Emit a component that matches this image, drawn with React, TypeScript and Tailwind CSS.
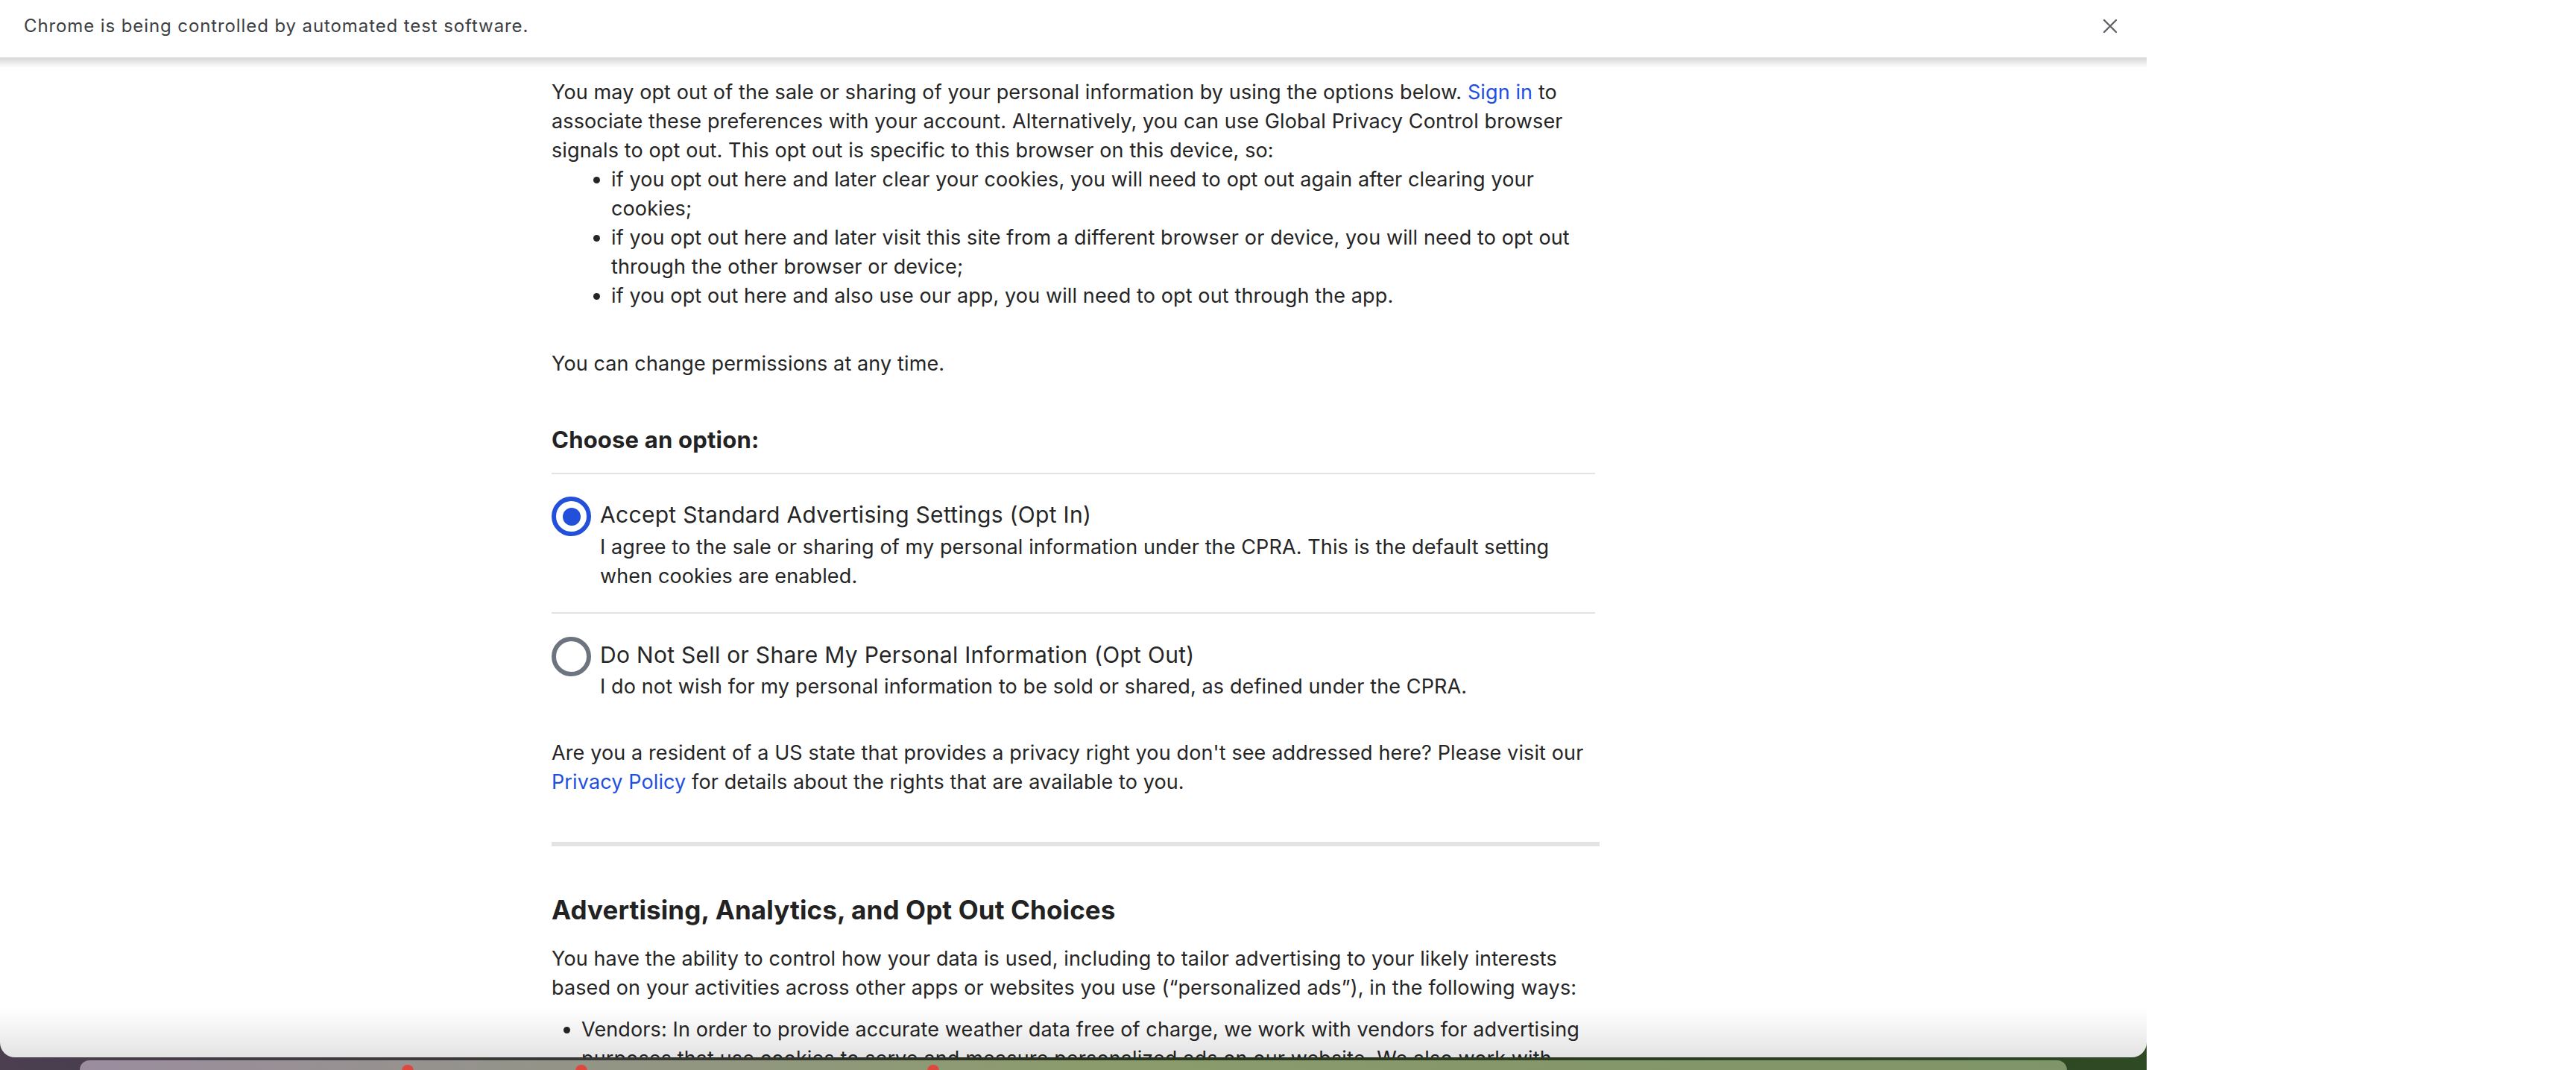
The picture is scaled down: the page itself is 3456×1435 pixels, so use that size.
import React from "react";

interface Option {
  id: string;
  title: string;
  desc: string;
  checked: boolean;
}

const options: Option[] = [
  {
    id: "opt-in",
    title: "Accept Standard Advertising Settings (Opt In)",
    desc: "I agree to the sale or sharing of my personal information under the CPRA. This is the default setting when cookies are enabled.",
    checked: true,
  },
  {
    id: "opt-out",
    title: "Do Not Sell or Share My Personal Information (Opt Out)",
    desc: "I do not wish for my personal information to be sold or shared, as defined under the CPRA.",
    checked: false,
  },
];

const Radio: React.FC<{ checked: boolean }> = ({ checked }) =>
  checked ? (
    <span className="flex h-[53px] w-[53px] shrink-0 items-center justify-center rounded-full border-[6px] border-[#2350db]">
      <span className="h-[24px] w-[24px] rounded-full bg-[#2350db]" />
    </span>
  ) : (
    <span className="h-[53px] w-[53px] shrink-0 rounded-full border-[6px] border-[#6e7380]" />
  );

const Banner: React.FC = () => (
  <div className="flex h-[77px] shrink-0 items-center justify-between bg-white pb-[8px] pl-[32px] pr-[39px]">
    <span className="font-['Inter',sans-serif] text-[24px] leading-[36px] tracking-[0.9px] text-[#3c4043]">
      Chrome is being controlled by automated test software.
    </span>
    <svg width="20" height="20" viewBox="0 0 20 20" className="text-[#5f6368]">
      <path d="M2 2 L18 18 M18 2 L2 18" stroke="currentColor" strokeWidth="2.4" strokeLinecap="round" />
    </svg>
  </div>
);

export default function App() {
  return (
    <div className="flex h-[1435px] w-[3456px] overflow-hidden bg-white font-['Inter',sans-serif] text-[#252525]">
      <div className="relative flex w-[2880px] shrink-0 flex-col bg-gradient-to-r from-[#4b3f50] via-[#27301f] to-[#2e4a24]">
        <div className="relative flex h-[1418px] shrink-0 flex-col overflow-hidden rounded-b-[20px] bg-white">
          <Banner />
          <div className="relative flex-1 overflow-hidden">
            <div className="pointer-events-none absolute left-0 right-0 top-0 h-[14px] bg-gradient-to-b from-[#d6d6d6] to-white/0" />
            <main className="ml-[740px] w-[1400px] pt-[27px] text-[27px] leading-[39px] tracking-[0.12px]">
              <p>
                You may opt out of the sale or sharing of your personal information by using the options below.{" "}
                <a className="text-[#1f4fe0]">Sign in</a> to associate these preferences with your account.
                Alternatively, you can use Global Privacy Control browser signals to opt out. This opt out is
                specific to this browser on this device, so:
              </p>
              <ul className="list-disc pl-[80px]">
                <li>if you opt out here and later clear your cookies, you will need to opt out again after clearing your cookies;</li>
                <li>if you opt out here and later visit this site from a different browser or device, you will need to opt out through the other browser or device;</li>
                <li>if you opt out here and also use our app, you will need to opt out through the app.</li>
              </ul>
              <p className="mt-[52px]">You can change permissions at any time.</p>

              <h3 className="mt-[63px] text-[31px] font-bold leading-[40px] tracking-[0.2px] text-[#222]">
                Choose an option:
              </h3>
              <div className="mt-[24px]">
                {options.map((o, i) => (
                  <div
                    key={o.id}
                    className={`flex gap-[12px] border-t-2 border-[#e3e3e3] ${
                      i === 0 ? "pb-[29px] pt-[30px]" : "pt-[31px]"
                    }`}
                  >
                    <Radio checked={o.checked} />
                    <div className="mt-[4px]">
                      <div className="text-[30px] leading-[40px] tracking-[0.3px]">{o.title}</div>
                      <div className={i === 0 ? "mt-[4px]" : "mt-[3px]"}>{o.desc}</div>
                    </div>
                  </div>
                ))}
              </div>

              <p className="mt-[50px]">
                Are you a resident of a US state that provides a privacy right you don't see addressed here? Please
                visit our <a className="text-[#1f4fe0]">Privacy Policy</a> for details about the rights that are
                available to you.
              </p>

              <hr className="mt-[61px] h-[6px] w-[1406px] border-0 bg-[#e3e3e3]" />

              <h2 className="mt-[63px] text-[35px] font-bold leading-[44px] text-[#222]">
                Advertising, Analytics, and Opt Out Choices
              </h2>
              <p className="mt-[24px]">
                You have the ability to control how your data is used, including to tailor advertising to your likely
                interests based on your activities across other apps or websites you use (“personalized ads”), in the
                following ways:
              </p>
              <ul className="mt-[17px] list-disc pl-[40px]">
                <li>
                  Vendors: In order to provide accurate weather data free of charge, we work with vendors for advertising
                  purposes that use cookies to serve and measure personalized ads on our website. We also work with
                  vendors to measure our audience.
                </li>
              </ul>
            </main>
          </div>
          <div className="pointer-events-none absolute bottom-0 left-0 right-0 h-[66px] bg-gradient-to-b from-black/0 to-black/[0.11]" />
        </div>
        <div className="relative flex-1 pt-[4px]">
          <div className="ml-[107px] h-full w-[2666px] rounded-t-[20px] bg-gradient-to-r from-[#9b8d9f] via-[#8b9b6c] to-[#7f9468]" />
          <span className="absolute left-[539px] top-[10px] h-[16px] w-[16px] rounded-full bg-[#e0483e]" />
          <span className="absolute left-[772px] top-[10px] h-[16px] w-[16px] rounded-full bg-[#e0483e]" />
          <span className="absolute left-[1244px] top-[10px] h-[16px] w-[16px] rounded-full bg-[#e0483e]" />
        </div>
      </div>
      <div className="flex-1 bg-white" />
    </div>
  );
}
